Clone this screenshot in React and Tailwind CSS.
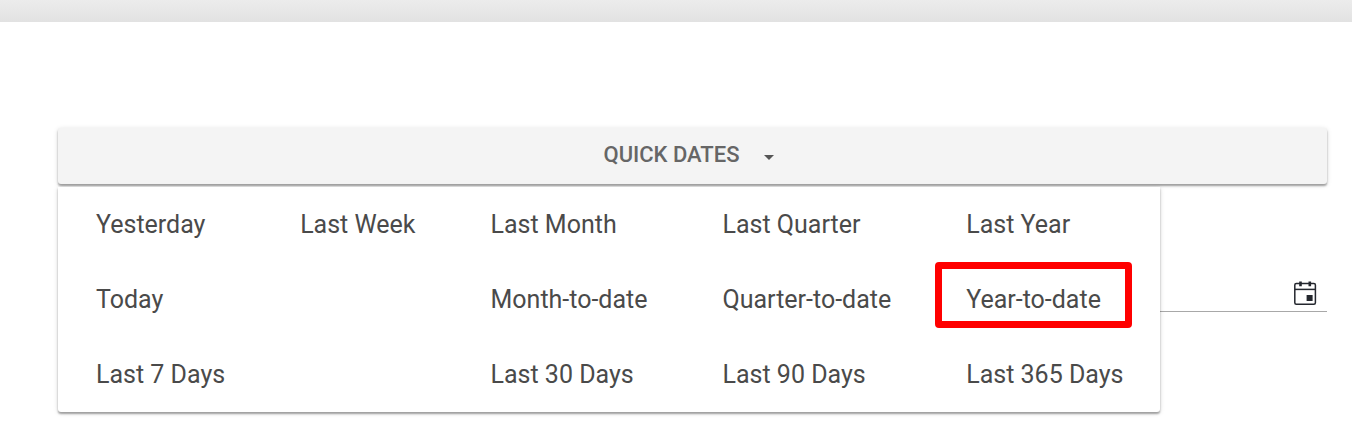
import { useState } from 'react';

// Listed row by row; null keeps the cell empty
const RANGES = [
  'Yesterday', 'Last Week', 'Last Month', 'Last Quarter', 'Last Year',
  'Today', null, 'Month-to-date', 'Quarter-to-date', 'Year-to-date',
  'Last 7 Days', null, 'Last 30 Days', 'Last 90 Days', 'Last 365 Days',
];

const HIGHLIGHTED = 'Year-to-date';

function CalendarIcon() {
  return (
    <svg width="24" height="26" viewBox="0 0 24 26" fill="none" stroke="#24272e">
      <rect x="1.8" y="3.6" width="20.6" height="20.6" rx="1.5" strokeWidth="1.5" />
      <path d="M2 9.4h20" strokeWidth="1.5" />
      <path d="M7.5 1.4v4.8M16.8 1.4v4.8" strokeWidth="2.6" />
      <rect x="13.6" y="15" width="6" height="6" fill="#24272e" stroke="none" />
    </svg>
  );
}

function QuickDatesMenu({ onSelect }) {
  return (
    <div className="absolute left-0 top-full mt-[3px] z-10 grid grid-cols-[repeat(5,auto)] auto-rows-[75px] rounded-b-[3px] bg-white shadow-[0_2px_2px_rgba(0,0,0,0.32),0_1px_5px_rgba(0,0,0,0.15)]">
      {RANGES.map((label, i) => label ? (
        <button
          key={label}
          type="button"
          onClick={() => onSelect(label)}
          className="relative pl-[38px] pr-[37px] text-left text-[25px] leading-[30px] whitespace-nowrap text-[#4a4a4a] cursor-pointer"
        >
          {label}
          {label === HIGHLIGHTED && (
            <span className="absolute left-[7px] top-0 h-[66px] w-[197px] rounded-[4px] border-[7px] border-[#ff0000]" />
          )}
        </button>
      ) : <span key={i} />)}
    </div>
  );
}

export default function App() {
  const [open, setOpen] = useState(true);
  const [date, setDate] = useState('');

  const handleSelect = (label) => {
    setDate(label);
    setOpen(false);
  };

  return (
    <div className="min-h-screen bg-white font-['Roboto',sans-serif]">
      <header className="h-[22px] bg-linear-to-b from-[#ececec] to-[#e2e2e2]" />

      <main className="pt-[106px] pl-[58px] pr-[25px]">
        <div className="relative">
          <button
            type="button"
            aria-expanded={open}
            onClick={() => setOpen(o => !o)}
            className="flex h-14 w-full items-center justify-center gap-6 rounded-[3px] bg-[#f4f4f4] pr-2 pb-1 text-[22px] font-medium text-[#666666] shadow-[0_2px_2px_rgba(0,0,0,0.32),0_1px_5px_rgba(0,0,0,0.15)] cursor-pointer"
          >
            QUICK DATES
            <svg width="10" height="5" viewBox="0 0 10 5" className="mt-1.5" fill="#555555">
              <path d="M0 0h10L5 5z" />
            </svg>
          </button>
          {open && <QuickDatesMenu onSelect={handleSelect} />}
        </div>

        {/* Date field */}
        <div className="mt-[88px] flex h-10 items-center border-b border-[#a8a8a8] pr-2.5">
          <input
            type="text"
            aria-label="Date"
            value={date}
            onChange={e => setDate(e.target.value)}
            className="min-w-0 flex-1 text-[25px] leading-[30px] text-[#4a4a4a] outline-none"
          />
          <button type="button" aria-label="Open calendar" className="pt-0.5 cursor-pointer">
            <CalendarIcon />
          </button>
        </div>
      </main>
    </div>
  );
}
